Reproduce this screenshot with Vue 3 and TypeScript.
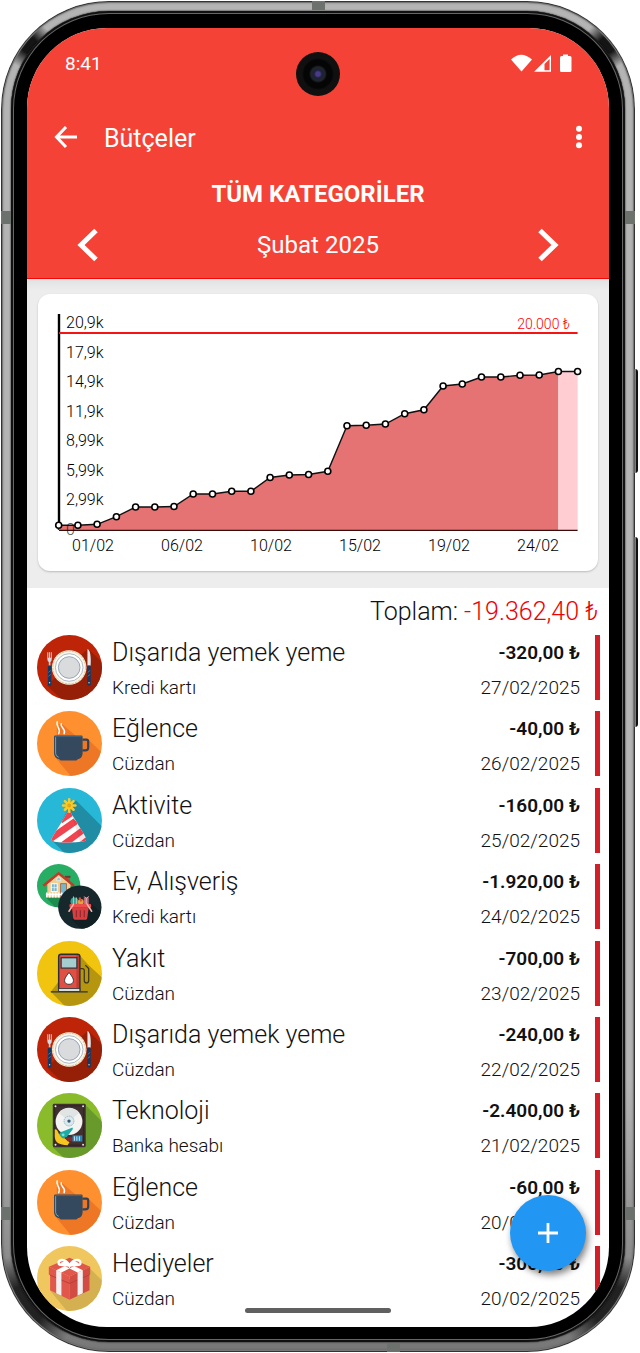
<script setup lang="ts">
interface Expense {
  title: string
  account: string
  amount: string
  date: string
  icon: string
}

const expenses: Expense[] = [
  { title: 'Dışarıda yemek yeme', account: 'Kredi kartı', amount: '-320,00 ₺', date: '27/02/2025', icon: 'food' },
  { title: 'Eğlence', account: 'Cüzdan', amount: '-40,00 ₺', date: '26/02/2025', icon: 'coffee' },
  { title: 'Aktivite', account: 'Cüzdan', amount: '-160,00 ₺', date: '25/02/2025', icon: 'party' },
  { title: 'Ev, Alışveriş', account: 'Kredi kartı', amount: '-1.920,00 ₺', date: '24/02/2025', icon: 'home' },
  { title: 'Yakıt', account: 'Cüzdan', amount: '-700,00 ₺', date: '23/02/2025', icon: 'fuel' },
  { title: 'Dışarıda yemek yeme', account: 'Cüzdan', amount: '-240,00 ₺', date: '22/02/2025', icon: 'food' },
  { title: 'Teknoloji', account: 'Banka hesabı', amount: '-2.400,00 ₺', date: '21/02/2025', icon: 'tech' },
  { title: 'Eğlence', account: 'Cüzdan', amount: '-60,00 ₺', date: '20/02/2025', icon: 'coffee' },
  { title: 'Hediyeler', account: 'Cüzdan', amount: '-300,00 ₺', date: '20/02/2025', icon: 'gift' },
]

const baseline = 236
const firstX = 20.7
const stepX = 19.22
const heights = [
  231.3, 231.3, 230.3, 222.7, 213, 213, 212.5, 200, 200, 197.3, 197.3, 183.5, 181, 180.5,
  177.3, 131.7, 131.3, 130, 119.7, 115.8, 92, 90, 83, 83, 81.3, 81, 77.5, 77.5,
]
const points = heights.map((y, i) => ({ x: +(firstX + i * stepX).toFixed(1), y }))
const linePath = points.map((p) => `${p.x},${p.y}`).join(' ')

function area(from: number, to: number): string {
  const part = points.slice(from, to + 1)
  const first = part[0]
  const last = part[part.length - 1]
  return `${first.x},${baseline} ${part.map((p) => `${p.x},${p.y}`).join(' ')} ${last.x},${baseline}`
}
const pastArea = area(0, 26)
const futureArea = area(26, 27)

const yLabels = ['20,9k', '17,9k', '14,9k', '11,9k', '8,99k', '5,99k', '2,99k', '0']
const xLabels = ['01/02', '06/02', '10/02', '15/02', '19/02', '24/02']
</script>

<template>
  <svg class="sprite" aria-hidden="true">
    <defs>
      <clipPath id="disc"><circle cx="33" cy="33" r="33" /></clipPath>
      <clipPath id="disc-a"><circle cx="22" cy="22" r="22" /></clipPath>
      <clipPath id="disc-b"><circle cx="43.5" cy="43.8" r="22" /></clipPath>
      <clipPath id="cone"><path d="M32.5 22 L15 51 Q14 54 18 54.500 Q33 56.500 48 54 Q51 53 49.500 50 Z" /></clipPath>
    </defs>

    <symbol id="food" viewBox="0 0 66 66">
      <g clip-path="url(#disc)">
        <rect width="66" height="66" fill="#bd2408" />
        <path d="M10 51 L52 14 L80 42 V80 H40Z" fill="#961f08" />
      </g>
      <circle cx="32.700" cy="33" r="17.500" fill="#f7f3e6" />
      <circle cx="32.700" cy="33" r="16.600" fill="none" stroke="#dcc389" stroke-width="1" stroke-dasharray="2.500 1" />
      <circle cx="32.700" cy="33" r="14" fill="#fff" stroke="#8e9db0" stroke-width=".7" />
      <circle cx="32.700" cy="33" r="11" fill="#d9dbdd" stroke="#8493a8" stroke-width=".8" />
      <path d="M10.500 17.500 V24 Q10.500 27 12 27.500 V31 H13.600 V27.500 Q15 27 15 24 V17.500 H14 V23 H13.200 V17.500 H12.300 V23 H11.500 V17.500Z" fill="#d6d9dd" />
      <rect x="11" y="31" width="3.600" height="20.500" rx="1.800" fill="#17375f" />
      <path d="M11.500 38 L14 36 M11.500 42 L14 40" stroke="#50759f" stroke-width=".9" />
      <path d="M51.200 31 V15 Q51.500 13 53.500 17 Q55 21 54.500 31Z" fill="#e5e7ea" />
      <rect x="51" y="31" width="3.600" height="20.500" rx="1.800" fill="#17375f" />
      <path d="M51.500 38 L54 36 M51.500 42 L54 40" stroke="#50759f" stroke-width=".9" />
      <circle cx="12.800" cy="48.500" r=".7" fill="#e5e7ea" /><circle cx="52.800" cy="48.500" r=".7" fill="#e5e7ea" />
    </symbol>

    <symbol id="coffee" viewBox="0 0 66 66">
      <g clip-path="url(#disc)">
        <rect width="66" height="66" fill="#ff9030" />
        <path d="M20 17 L24 12 L45 30 L51 28 L80 56 V80 H46 L20 49Z" fill="#ee7726" />
      </g>
      <path d="M20.500 11 C18.500 16 25 17 22 23 M24.500 13 C23.500 17 30 18 27.500 23" fill="none" stroke="#fff" stroke-width="1.500" stroke-linecap="round" />
      <path d="M46 29 H50 Q52 29 52 31 V37 Q52 40 49 40 H46" fill="none" stroke="#2f4358" stroke-width="2.200" />
      <path d="M17.300 26 Q17.300 25 18.500 25 H45 Q46.300 25 46.300 26 V43 Q46.300 48 41.500 49 L40 50.200 H24 L22.500 49 Q17.300 48 17.300 43Z" fill="#34495e" />
      <path d="M18.900 26.500 V43 Q19 46 22 47" fill="none" stroke="#6daab8" stroke-width="1" />
      <path d="M18 26 H45.500" stroke="#43627c" stroke-width="1" />
    </symbol>

    <symbol id="party" viewBox="0 0 66 66">
      <g clip-path="url(#disc)">
        <rect width="66" height="66" fill="#27b7d7" />
        <path d="M36 13 L40 13 L80 53 V80 H42 L15 53Z" fill="#208da5" />
      </g>
      <g clip-path="url(#cone)">
        <rect x="10" y="20" width="45" height="40" fill="#fff" />
        <path d="M28 20 H37 V28 L25 36 V30Z M20 43 L37 31 L42 36 L12 57 V48Z M22 57 L45 40 L49 45 L33 57Z M41 57 L52 48 V57Z" fill="#f04450" />
        <path d="M33 20 L52 50 V58 L44 56Z" fill="#a6263e" opacity=".12" />
      </g>
      <g stroke="#ffc91e" stroke-width="2.600" stroke-linecap="round">
        <path d="M32.700 11.500 V24 M26.500 17.700 H39 M28.300 13.300 L37.100 22.100 M37.100 13.300 L28.300 22.100" />
      </g>
      <circle cx="32.700" cy="17.700" r="2" fill="#e5a719" />
    </symbol>

    <symbol id="home" viewBox="0 0 66 66">
      <g clip-path="url(#disc-a)">
        <rect width="66" height="66" fill="#28ad64" />
        <path d="M37 21 L60 44 V60 H34 L9 34Z" fill="#1e8c4f" />
      </g>
      <path d="M29 12.500 H33.500 V20 L29 17Z" fill="#a65a3d" /><path d="M28.500 12 H34 V14 H28.500Z" fill="#683f32" />
      <path d="M10.500 20 L22 10 L34 20 V34 H10.500Z" fill="#f0cf94" />
      <path d="M6.500 22 L22 9.500 L37.500 22" fill="none" stroke="#c43a29" stroke-width="2.600" />
      <path d="M20 16 Q20 13.500 22 13.500 Q24 13.500 24 16 V17 H20Z" fill="#8fcbe0" stroke="#fff" stroke-width=".6" />
      <rect x="14.500" y="20" width="6" height="8" fill="#77b7ce" stroke="#fff" /><path d="M17.500 20 V28 M14.500 24 H20.500" stroke="#fff" stroke-width=".6" />
      <rect x="24" y="20" width="6" height="14" fill="#77b7ce" stroke="#9e5b3b" stroke-width=".8" />
      <path d="M9 31 H28 M10 29 V34 M13 29 V34 M16 29 V34 M19 29 V34 M22 29 V34 M25 29 V34" stroke="#fff" stroke-width="1.700" />
      <g clip-path="url(#disc-b)">
        <rect width="66" height="66" fill="#17282c" />
        <path d="M55 40 L66 50 V66 H45 L35 56Z" fill="#102023" />
      </g>
      <circle cx="38" cy="38" r="4" fill="#3e9f91" /><path d="M37 33 V42 M40 34 V41" stroke="#9ed0c0" stroke-width="1" />
      <circle cx="44.500" cy="38.500" r="3" fill="#e3a33e" /><path d="M43 34 L45 38" stroke="#d5503c" stroke-width="2" />
      <rect x="47.500" y="34" width="5" height="8" fill="#bb6a7d" /><path d="M48 33 L50 35 L52.500 33 M50 35 V42" stroke="#e9b3b5" stroke-width="1" fill="none" />
      <rect x="33" y="40.500" width="22" height="4" rx="1" fill="#ed4d4b" />
      <path d="M35.500 44.500 H52.500 L51 55 Q51 56.500 49.500 56.500 H38.500 Q37 56.500 36.800 55Z" fill="#d93f41" />
      <path d="M40 47 V54 M44 47 V54 M48 47 V54" stroke="#962a31" stroke-width="1.300" />
      <path d="M37 41 L32.500 48 M51 41 L55.500 48" stroke="#f2b6b0" stroke-width="1.600" stroke-linecap="round" />
    </symbol>

    <symbol id="fuel" viewBox="0 0 66 66">
      <g clip-path="url(#disc)">
        <rect width="66" height="66" fill="#f1c40f" />
        <path d="M43 14 L52 24 L80 50 V80 H42 L14 51.500Z" fill="#b6960f" />
      </g>
      <path d="M22 50 V16 Q22 13.500 24.500 13.500 H41 Q43.500 13.500 43.500 16 V50Z" fill="#e04f43" stroke="#2b3034" stroke-width="1.500" />
      <path d="M40 14.500 H41 Q42.800 14.500 42.800 16.500 V48 H40Z" fill="#bf3d36" />
      <rect x="24.500" y="17" width="16" height="10.500" fill="#a5cdd0" stroke="#2b3034" stroke-width="1.200" />
      <path d="M32.500 32 Q37 37.500 37 40 Q37 44 32.500 44 Q28 44 28 40 Q28 37.500 32.500 32Z" fill="#fff" stroke="#2b3034" stroke-width=".9" />
      <rect x="22" y="48.300" width="21.500" height="3" fill="#d8dfdf" stroke="#2b3034" stroke-width=".8" />
      <path d="M14 51.700 H51.500" stroke="#2b3034" stroke-width="1.300" />
      <path d="M43.500 28 H46 Q48 28 48 30 V40 Q48 42.500 50.300 42.500 Q52.500 42.500 52.500 40 V28 L49 24.500" fill="none" stroke="#3e391e" stroke-width="1.300" />
    </symbol>

    <symbol id="tech" viewBox="0 0 66 66">
      <g clip-path="url(#disc)">
        <rect width="66" height="66" fill="#8abb2b" />
        <path d="M49 12 L80 43 V80 H42 L16 55Z" fill="#679a2b" />
      </g>
      <rect x="16" y="11" width="33.500" height="44" rx="1.500" fill="#40302f" />
      <path d="M18 13 H47.500 V53 H18Z" fill="none" stroke="#2f2323" />
      <circle cx="32.500" cy="29" r="13.600" fill="#f3f3f1" />
      <path d="M22 20 A13.600 13.600 0 0 1 43 20 L32.500 29Z" fill="#e1e4e4" />
      <circle cx="32.500" cy="28.500" r="5" fill="#dce8ed" stroke="#8fb6c8" stroke-dasharray="1.500 .8" />
      <circle cx="32.500" cy="28.500" r="1.700" fill="#315b72" />
      <path d="M18 37 Q20 36 22 41 L33 50 L31 53 Q18 53 18 44Z" fill="#f7c51e" />
      <path d="M23 43 Q22 40 26 39 L36 35 L36.500 36.500 L30 45 Q26 48 23 43Z" fill="#1caca5" />
      <circle cx="26.500" cy="42.500" r="1.500" fill="#7ce0d6" />
      <path d="M28 45 L36 45 V49 H31Z" fill="#852a2e" />
      <rect x="36" y="43" width="10" height="6.300" fill="#2f84b4" />
      <path d="M38 44 V48.500 M40.500 44 V48.500 M43 44 V48.500" stroke="#c4e7f5" stroke-width="1" />
      <g fill="#e8e8e8"><circle cx="18.800" cy="13.500" r="1" /><circle cx="46.800" cy="13.500" r="1" /><circle cx="18.800" cy="52.500" r="1" /><circle cx="46.800" cy="52.500" r="1" /></g>
    </symbol>

    <symbol id="gift" viewBox="0 0 66 66">
      <g clip-path="url(#disc)">
        <rect width="66" height="66" fill="#efc75e" />
        <path d="M54 23 L80 49 V80 H42 L13 45Z" fill="#d4b051" />
      </g>
      <path d="M13.300 26 L33 34 V54.500 L13.300 45Z" fill="#e2574c" />
      <path d="M53.300 26 L33 34 V54.500 L53.300 45Z" fill="#d24c43" />
      <path d="M33 12 L54 21 L33 31 L12 21Z" fill="#e2574c" />
      <path d="M12 21 L33 31 V38 L12 29Z" fill="#e2574c" /><path d="M54 21 L33 31 V38 L54 29Z" fill="#d24c43" />
      <path d="M13 29.500 L33 38 L53 29.500" fill="none" stroke="#b8413a" stroke-width="1" />
      <path d="M19.500 24.500 L24.800 27 V50.500 L19.500 48Z M46.500 24.500 L41.200 27 V50.500 L46.500 48Z" fill="#f1efef" />
      <path d="M19.500 24.500 L38 15.500 L43 17.500 L24.800 27Z M46.500 24.500 L28 15.500 L23 17.500 L41.200 27Z" fill="#fff" />
      <path d="M33 20 C29 12 21 13 22 18 C23 21 29 18 33 20 C37 18 43 21 44 18 C45 13 37 12 33 20Z" fill="none" stroke="#fff" stroke-width="2.500" />
    </symbol>
  </svg>

  <main class="stage">
    <div class="phone">
      <i class="key key-power"></i>
      <i class="key key-volume"></i>
      <i class="band band-top"></i>
      <i class="band band-left"></i>
      <i class="band band-right"></i>
      <i class="band band-left low"></i>
      <i class="band band-right low"></i>
      <i class="band band-bottom"></i>
      <div class="bezel">
        <div class="screen">
          <header class="header">
            <div class="status">
              <span>8:41</span>
              <svg class="status-icons" viewBox="0 0 61 18" aria-hidden="true">
                <path d="M0 5.500 Q10 -4 21 5.500 L10.500 17.500Z" fill="#fff" />
                <path fill-rule="evenodd" d="M23 17.700 L40 1 V17.700Z M33.500 10 V16.300 H38.600 V5Z" fill="#fff" />
                <path d="M52 2 V.5 H57 V2 H59 Q60.500 2 60.500 3.500 V16.500 Q60.500 18 59 18 H50.500 Q49 18 49 16.500 V3.500 Q49 2 50.500 2Z" fill="#fff" />
              </svg>
            </div>
            <div class="toolbar">
              <button class="icon-btn" type="button" aria-label="Geri">
                <svg width="24" height="24" viewBox="0 0 24 24"><path d="M12 2 L2.500 12 L12 22 M2.500 12 H23" fill="none" stroke="#fff" stroke-width="3" /></svg>
              </button>
              <h1>Bütçeler</h1>
              <button class="icon-btn" type="button" aria-label="Menü">
                <svg width="24" height="24" viewBox="0 0 24 24" fill="#fff"><circle cx="12" cy="3.800" r="3" /><circle cx="12" cy="12" r="3" /><circle cx="12" cy="20.200" r="3" /></svg>
              </button>
            </div>
            <h2>TÜM KATEGORİLER</h2>
            <div class="month">
              <button class="icon-btn" type="button" aria-label="Önceki ay">
                <svg width="22" height="34" viewBox="0 0 22 34"><path d="M19 2.500 L4 17 L19 31.500" fill="none" stroke="#fff" stroke-width="5" /></svg>
              </button>
              <span>Şubat 2025</span>
              <button class="icon-btn" type="button" aria-label="Sonraki ay">
                <svg width="22" height="34" viewBox="0 0 22 34"><path d="M3 2.500 L18 17 L3 31.500" fill="none" stroke="#fff" stroke-width="5" /></svg>
              </button>
            </div>
          </header>

          <section class="chart-area">
            <div class="card">
              <svg class="chart" viewBox="0 0 560 277" role="img" aria-label="Bütçe grafiği">
                <line x1="21" y1="20" x2="21" y2="236" stroke="#000" stroke-width="2.400" />
                <polygon :points="pastArea" fill="#e57373" />
                <polygon :points="futureArea" fill="#ffcdd2" />
                <line x1="21" y1="236.400" x2="539.600" y2="236.400" stroke="#3a0d0d" stroke-width="1.200" />
                <line x1="21" y1="39" x2="539.600" y2="39" stroke="#f51414" stroke-width="2" />
                <polyline :points="linePath" fill="none" stroke="#111" stroke-width="1.400" />
                <text
                  v-for="(label, i) in yLabels"
                  :key="label"
                  class="tick"
                  :class="{ faded: label === '0' }"
                  x="28"
                  :y="34 + Math.round(i * 29.5)"
                >{{ label }}</text>
                <circle v-for="p in points" :key="p.x" :cx="p.x" :cy="p.y" r="3" fill="#fff" stroke="#000" stroke-width="1.600" />
                <text v-for="(label, i) in xLabels" :key="label" class="tick day" :x="55 + i * 89" y="257">{{ label }}</text>
                <text class="limit" x="532" y="35">20.000 ₺</text>
              </svg>
            </div>
          </section>

          <p class="total">Toplam: <span>-19.362,40 ₺</span></p>

          <ul class="list">
            <li v-for="(item, i) in expenses" :key="i" class="row">
              <svg class="avatar" aria-hidden="true"><use :href="'#' + item.icon" /></svg>
              <div class="info">
                <span class="name">{{ item.title }}</span>
                <span class="sub">{{ item.account }}</span>
              </div>
              <div class="info figures">
                <span class="amount">{{ item.amount }}</span>
                <span class="sub">{{ item.date }}</span>
              </div>
              <i class="marker"></i>
            </li>
          </ul>

          <button class="fab" type="button" aria-label="Ekle">
            <svg width="20" height="20" viewBox="0 0 20 20"><path d="M10 0 V20 M0 10 H20" stroke="#fff" stroke-width="2.800" /></svg>
          </button>
          <i class="home-bar"></i>
          <i class="camera"></i>
        </div>
      </div>
    </div>
  </main>
</template>

<style>
body {
  margin: 0;
  background: #fff;
}
</style>

<style scoped>
* {
  box-sizing: border-box;
}
.sprite {
  position: absolute;
  width: 0;
  height: 0;
}
.stage {
  display: flex;
  min-height: 100vh;
  padding: 1px 5px 1px 1px;
  font-family: Roboto, "Noto Sans", sans-serif;
  color: #111;
}
.phone {
  position: relative;
  display: flex;
  flex: 1;
  padding: 10px;
  border-radius: 108px;
  background:
    radial-gradient(circle at 28px 44px, #151515 8px, transparent 24px),
    radial-gradient(circle at calc(100% - 28px) 44px, #151515 8px, transparent 24px),
    radial-gradient(circle at 24px calc(100% - 46px), #222 20px, transparent 52px),
    radial-gradient(circle at calc(100% - 24px) calc(100% - 46px), #222 20px, transparent 52px),
    linear-gradient(#b4b4b4 80%, #777);
  box-shadow: inset 0 0 0 1px #333, inset 0 0 0 2px #777, inset 0 0 3px 1px #444;
}
.bezel {
  display: flex;
  flex: 1;
  padding: 17px 16px 15px;
  border-radius: 98px;
  background: #000;
  box-shadow: inset 0 0 0 2px #111, inset 0 0 0 3px #666, 0 0 2px #000;
}
.screen {
  position: relative;
  display: flex;
  flex: 1;
  flex-direction: column;
  min-width: 0;
  overflow: hidden;
  border-radius: 80px;
  background: #fff;
}
.key {
  position: absolute;
  right: -3px;
  width: 4px;
  border-radius: 0 3px 3px 0;
  background: linear-gradient(90deg, #555, #888 50%, #111 60%);
}
.key-power {
  top: 368px;
  height: 104px;
}
.key-volume {
  top: 536px;
  height: 190px;
}
.band {
  position: absolute;
  width: 10px;
  height: 13px;
  background: #6d716e;
}
.band-top {
  top: 0;
  left: 311px;
  width: 13px;
  height: 9px;
}
.band-left {
  top: 210px;
  left: 0;
}
.band-right {
  top: 210px;
  right: 0;
}
.low {
  top: 1206px;
}
.band-bottom {
  bottom: 0;
  left: 386px;
  width: 13px;
  height: 9px;
}
.header {
  border-bottom: 1px solid #f00808;
  background: #f44336;
  color: #fff;
}
.status {
  display: flex;
  align-items: center;
  justify-content: space-between;
  height: 70px;
  padding: 0 37px 0 38px;
  font-size: 19px;
}
.status-icons {
  width: 61px;
  height: 18px;
}
.toolbar {
  display: flex;
  align-items: center;
  height: 78px;
  padding: 0 18px 0 27px;
}
h1 {
  flex: 1;
  margin: 0 0 0 26px;
  padding-top: 2px;
  font-size: 25px;
  font-weight: 400;
}
h2 {
  margin: 0;
  font-size: 24px;
  font-weight: 700;
  line-height: 36px;
  text-align: center;
}
.month {
  display: flex;
  align-items: center;
  justify-content: space-between;
  height: 66px;
  padding: 0 50px;
  font-size: 24px;
}
.icon-btn {
  display: flex;
  padding: 0;
  border: 0;
  background: none;
}
.chart-area {
  padding: 15px 11px 17px;
  background: linear-gradient(#e2e2e2, #ededed 12px);
}
.card {
  border-radius: 12px;
  background: #fff;
  box-shadow: 0 1px 2px #bbb;
}
.chart {
  display: block;
  width: 100%;
}
.tick {
  font-size: 16px;
  font-weight: 300;
  fill: #000;
}
.faded {
  opacity: 0.7;
}
.day {
  text-anchor: middle;
}
.limit {
  font-size: 14px;
  font-weight: 300;
  text-anchor: end;
  fill: #f00;
}
.total {
  margin: 0;
  padding-right: 11px;
  font-size: 25px;
  font-weight: 300;
  line-height: 47px;
  text-align: right;
}
.total span {
  color: #f00000;
}
.list {
  display: flex;
  flex: 1;
  flex-direction: column;
  justify-content: space-between;
  margin: 0;
  padding: 0 9px 11px 10px;
  list-style: none;
}
.row {
  display: flex;
  gap: 10px;
}
.avatar {
  flex: none;
  width: 65px;
  height: 65px;
}
.info {
  display: flex;
  flex: 1;
  flex-direction: column;
}
.figures {
  flex: none;
  align-items: flex-end;
  margin-right: 5px;
}
.name {
  font-size: 25px;
  font-weight: 300;
  line-height: 36px;
}
.sub {
  font-size: 19px;
  font-weight: 300;
  line-height: 34px;
}
.amount {
  font-size: 19px;
  font-weight: 600;
  line-height: 36px;
}
.marker {
  width: 5px;
  height: 65px;
  background: #d32028;
}
.fab {
  position: absolute;
  right: 23px;
  bottom: 56px;
  display: flex;
  align-items: center;
  justify-content: center;
  width: 76px;
  height: 76px;
  padding: 0;
  border: 0;
  border-radius: 50%;
  background: #2196f3;
  box-shadow: 2px 4px 7px rgba(0, 0, 0, 0.5);
}
.home-bar {
  position: absolute;
  bottom: 14px;
  left: 50%;
  width: 146px;
  height: 5px;
  border-radius: 3px;
  background: #606060;
  transform: translateX(-50%);
}
.camera {
  position: absolute;
  top: 24px;
  left: 50%;
  width: 44px;
  height: 44px;
  border-radius: 50%;
  background: radial-gradient(circle, #4b3a8c 0 2px, #1d2038 4px, #20252b 7px, #050505 9px 14px, #101010 16px);
  transform: translateX(-50%);
}
</style>
